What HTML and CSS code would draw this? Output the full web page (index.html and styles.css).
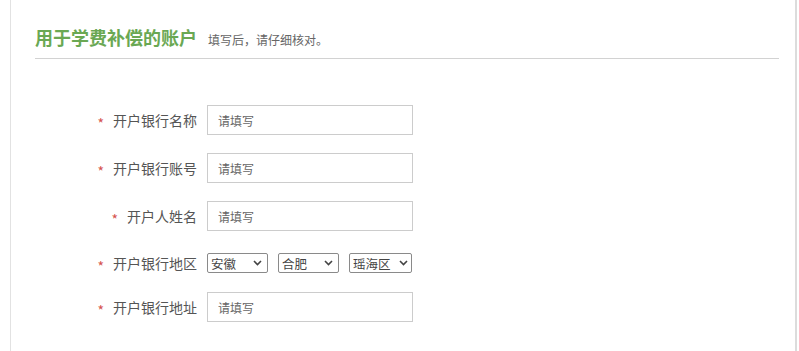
FILE: index.html
```
<!DOCTYPE html>
<html lang="zh-CN">
<head>
    <meta charset="UTF-8">
    <title>用于学费补偿的账户</title>
    <link rel="stylesheet" href="styles.css">
</head>
<body>
    <div class="panel">
        <div class="head">
            <h2 class="title">用于学费补偿的账户</h2>
            <span class="tip">填写后，请仔细核对。</span>
        </div>

        <form class="form">
            <div class="row">
                <label class="label" for="bankName"><span class="star">*</span>开户银行名称</label>
                <input class="field" type="text" id="bankName" placeholder="请填写">
            </div>
            <div class="row">
                <label class="label" for="bankNo"><span class="star">*</span>开户银行账号</label>
                <input class="field" type="text" id="bankNo" placeholder="请填写">
            </div>
            <div class="row">
                <label class="label" for="owner"><span class="star">*</span>开户人姓名</label>
                <input class="field" type="text" id="owner" placeholder="请填写">
            </div>
            <div class="row row-area">
                <label class="label"><span class="star">*</span>开户银行地区</label>
                <div class="pick">
                    <select class="sel sel-prov">
                        <option>安徽</option>
                    </select>
                    <svg class="arrow" width="9" height="6" viewBox="0 0 9 6"><path d="M1 1 L4.5 4.5 L8 1" fill="none" stroke="#444" stroke-width="1.6"/></svg>
                </div>
                <div class="pick">
                    <select class="sel sel-city">
                        <option>合肥</option>
                    </select>
                    <svg class="arrow" width="9" height="6" viewBox="0 0 9 6"><path d="M1 1 L4.5 4.5 L8 1" fill="none" stroke="#444" stroke-width="1.6"/></svg>
                </div>
                <div class="pick">
                    <select class="sel sel-dist">
                        <option>瑶海区</option>
                    </select>
                    <svg class="arrow arrow-dist" width="9" height="6" viewBox="0 0 9 6"><path d="M1 1 L4.5 4.5 L8 1" fill="none" stroke="#444" stroke-width="1.6"/></svg>
                </div>
            </div>
            <div class="row">
                <label class="label" for="bankAddr"><span class="star">*</span>开户银行地址</label>
                <input class="field" type="text" id="bankAddr" placeholder="请填写">
            </div>
        </form>
    </div>
</body>
</html>
```

FILE: styles.css
```
body {
    margin: 0;
    background: #fff;
    font-family: "Noto Sans CJK SC", "Microsoft YaHei", sans-serif;
}
.panel {
    margin-left: 10px;
    width: 784px;
    height: 351px;
    border-left: 1px solid #e2e2e2;
    border-right: 2px solid #dcdcdc;
}
.head {
    display: flex;
    align-items: baseline;
    margin: 0 16px 0 24px;
    padding-top: 25px;
    height: 33px;
    border-bottom: 1px solid #d2d2d2;
}
.title {
    margin: 0;
    font-size: 18px;
    line-height: 24px;
    font-weight: bold;
    color: #6aa853;
}
.tip {
    margin-left: 11px;
    font-size: 12px;
    color: #666;
}
.form {
    display: flex;
    flex-direction: column;
    gap: 18px;
    padding-top: 46px;
}
.row {
    display: flex;
    align-items: center;
}
.row-area {
    height: 23px;
    padding-top: 2px;
}
.label {
    width: 186px;
    margin-right: 10px;
    text-align: right;
    font-size: 14px;
    line-height: 20px;
    color: #555;
}
.star {
    color: #d5534e;
    margin-right: 9px;
    font-size: 14px;
    line-height: 1;
    vertical-align: -3px;
}
.field {
    width: 206px;
    height: 30px;
    box-sizing: border-box;
    padding: 0 10px;
    border: 1px solid #ccc;
    border-radius: 0;
    font-family: inherit;
    font-size: 12px;
    color: #333;
    outline: none;
}
.field::placeholder {
    color: #666;
}
.pick {
    position: relative;
    height: 20px;
    margin-right: 10px;
}
.sel {
    appearance: none;
    -webkit-appearance: none;
    display: block;
    height: 20px;
    box-sizing: border-box;
    padding: 0 0 0 3px;
    border: 1px solid #8a8a8a;
    border-radius: 2px;
    background: #fff;
    font-family: inherit;
    font-size: 12.5px;
    color: #444;
}
.sel-prov, .sel-city {
    width: 61px;
}
.sel-dist {
    width: 63px;
}
.arrow {
    position: absolute;
    right: 6px;
    top: 7px;
    pointer-events: none;
}
.arrow-dist {
    right: 4px;
}
```
